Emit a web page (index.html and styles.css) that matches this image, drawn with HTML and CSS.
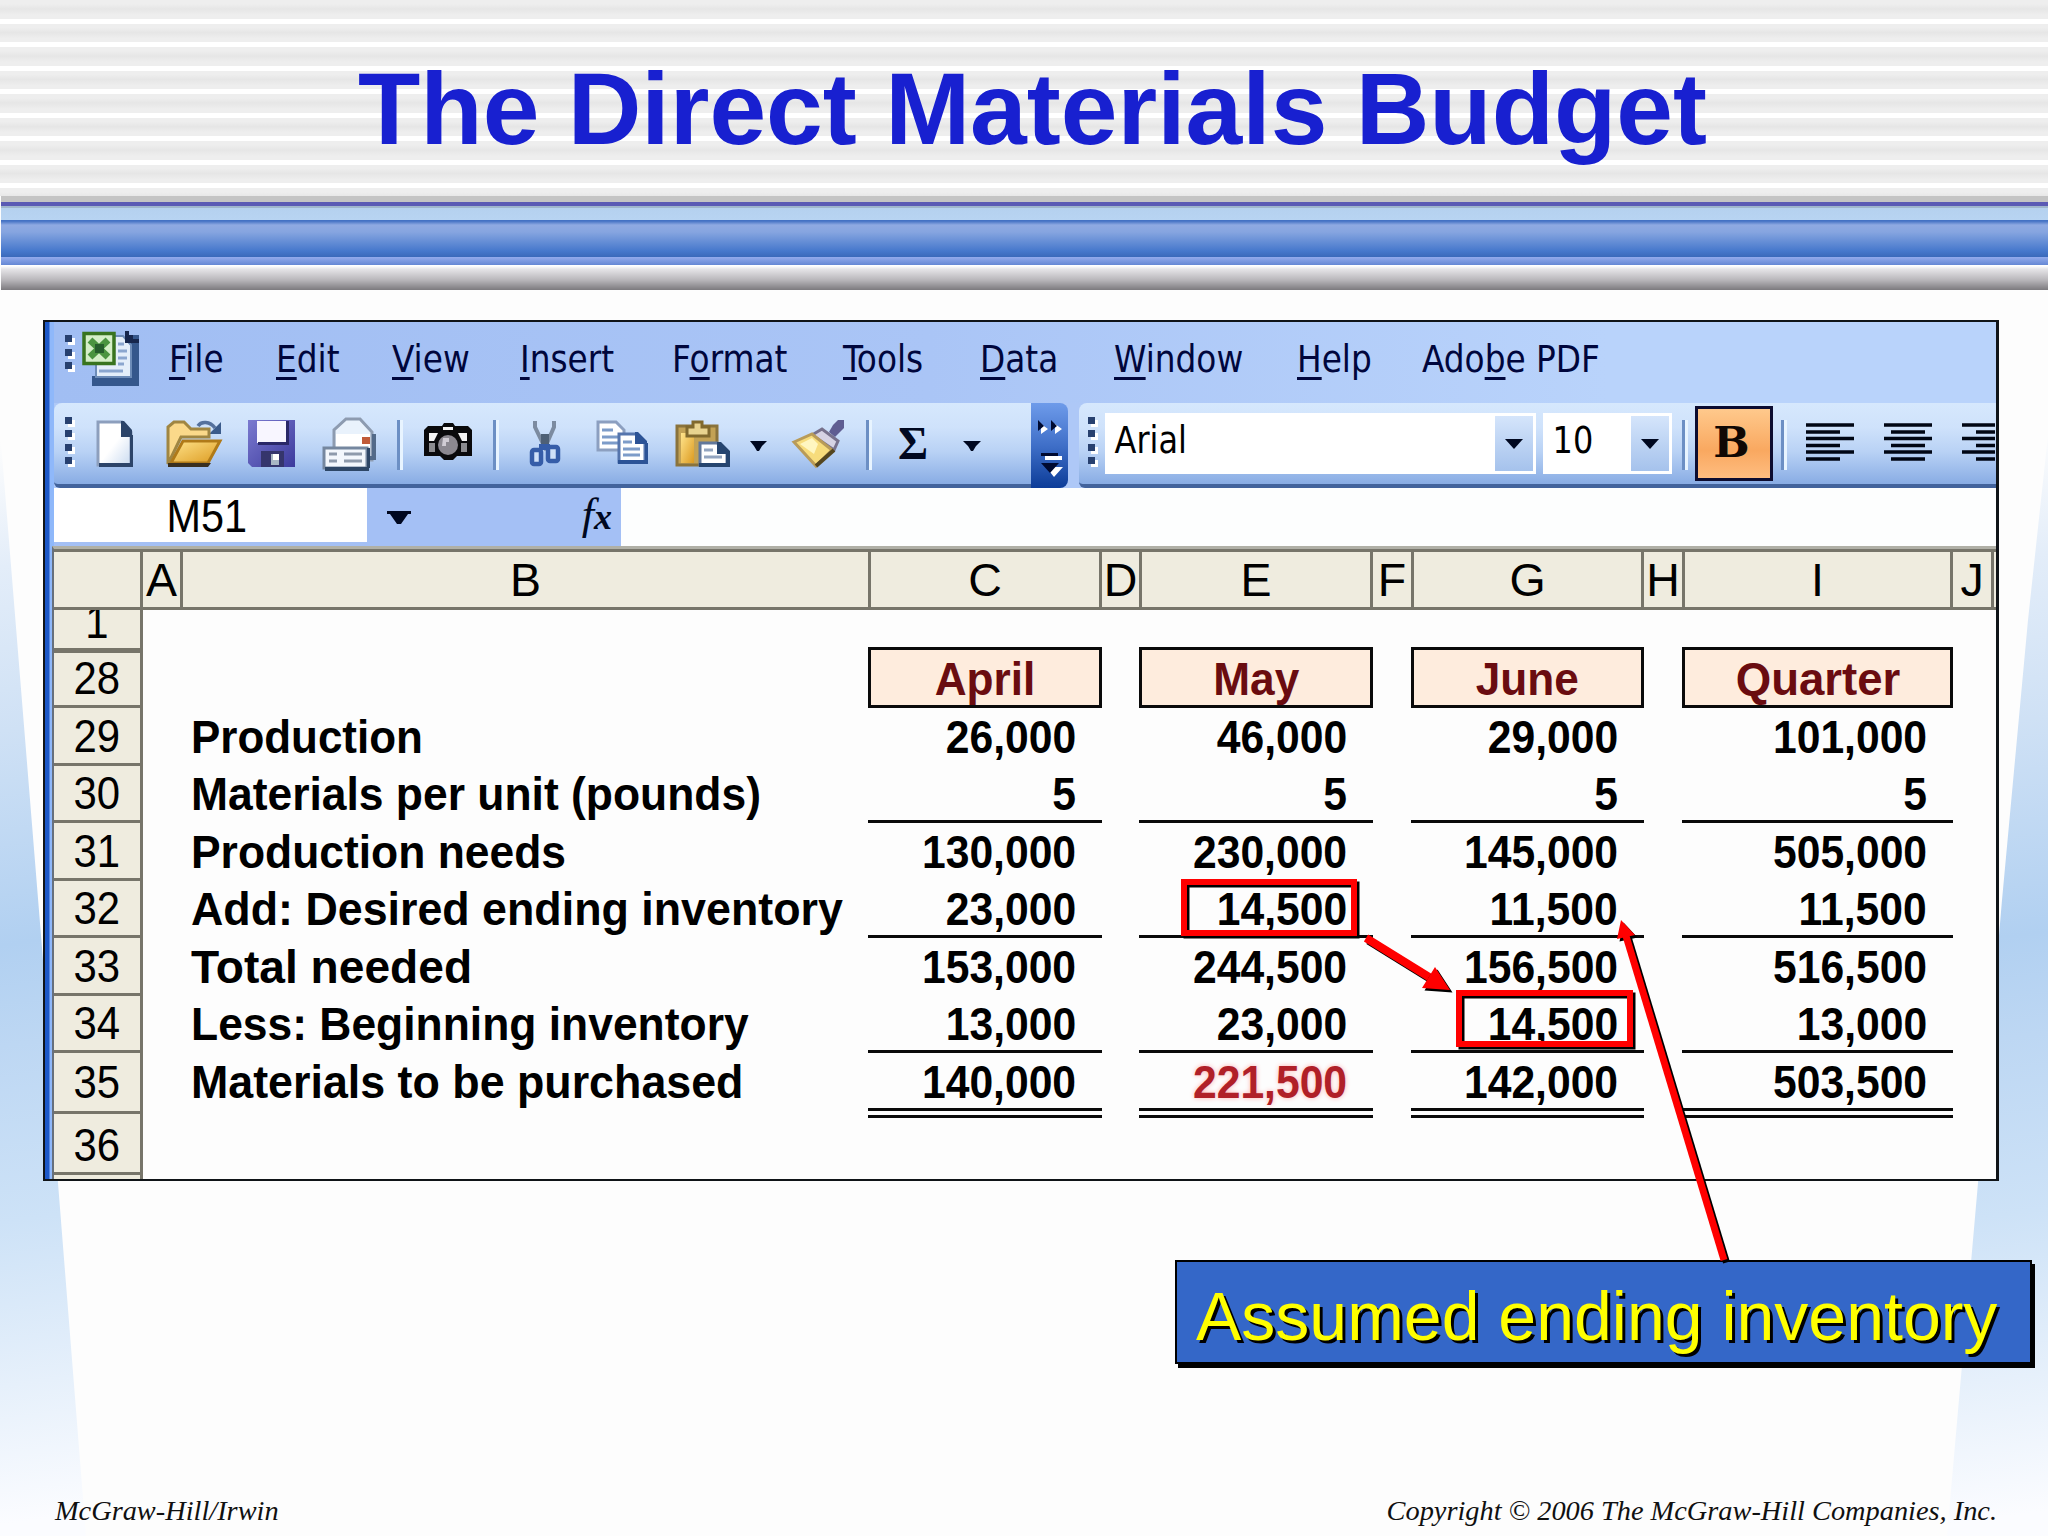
FILE: index.html
```html
<!DOCTYPE html>
<html lang="en">
<head>
    <meta charset="utf-8">
    <title>The Direct Materials Budget</title>
    <link rel="stylesheet" href="styles.css">
</head>
<body>
    <div class="slide">
        <div class="wedge wedge-left"></div>
        <div class="wedge wedge-right"></div>

        <header class="title-area">
            <h1>The Direct Materials Budget</h1>
        </header>
        <div class="bands">
            <div class="band-top"></div>
            <div class="band-purple"></div>
            <div class="band-light"></div>
            <div class="band-blue"></div>
            <div class="band-thin"></div>
            <div class="band-gray"></div>
        </div>

        <main class="window">
            <nav class="menu">
                <svg class="menu-icon" width="115" height="81" viewBox="54 322 115 81">
                    <g fill="#fff"><path d="M68 338h7v7h-7zM68 352h7v7h-7zM68 365h7v7h-7z"/></g>
                    <g fill="#27406f"><path d="M65 335h7v7h-7zM65 349h7v7h-7zM65 362h7v7h-7z"/></g>
                    <path fill="#35578c" d="M92 376h38v-41h9v51H92z"/>
                    <path fill="#e4eefa" stroke="#6d8cb8" stroke-width="2" d="M96 336h27l8 9v32H96z"/>
                    <path fill="#16264d" d="M125 331h4v4h4v4h6v4h-14z"/>
                    <path stroke="#8ba6cf" stroke-width="3" d="M99 371h24M118 351h9M118 358h9M118 364h6M118 344h6"/>
                    <path fill="#d5efc8" stroke="#38741f" stroke-width="3.500" d="M84 333.500h30v30H84z"/>
                    <path stroke="#4b9440" stroke-width="7" d="M90 340l18 17M108 340l-18 17"/>
                    <path fill="#265e2c" d="M95 344h9v9h-9z"/>
                </svg>
                <span><u>F</u>ile</span>
                <span><u>E</u>dit</span>
                <span><u>V</u>iew</span>
                <span><u>I</u>nsert</span>
                <span>F<u>o</u>rmat</span>
                <span><u>T</u>ools</span>
                <span><u>D</u>ata</span>
                <span><u>W</u>indow</span>
                <span><u>H</u>elp</span>
                <span>Ado<u>b</u>e PDF</span>
            </nav>

            <div class="toolbars">
                <div class="toolbar standard">
                    <svg width="31" height="81" viewBox="54 403 31 81">
                        <path fill="#fff" d="M68 420h7v7h-7zM68 433h7v7h-7zM68 447h7v7h-7zM68 460h7v7h-7z"/>
                        <path fill="#27406f" d="M65 417h7v7h-7zM65 430h7v7h-7zM65 444h7v7h-7zM65 457h7v7h-7z"/>
                    </svg>
                    <!-- new -->
                    <svg width="70" height="81" viewBox="85 403 70 81">
                        <defs>
                            <linearGradient id="paper" x1="0" y1="0" x2="1" y2="1"><stop offset=".5" stop-color="#fff"/><stop offset="1" stop-color="#c9daf0"/></linearGradient>
                            <linearGradient id="gold" x1="0" y1="0" x2="1" y2="1"><stop offset="0" stop-color="#ffe48c"/><stop offset="1" stop-color="#dc9a20"/></linearGradient>
                            <linearGradient id="violet" x1="0" y1="0" x2="1" y2="1"><stop offset="0" stop-color="#7b7ad0"/><stop offset="1" stop-color="#3c3a9c"/></linearGradient>
                        </defs>
                        <path fill="url(#paper)" stroke="#8d9fbd" stroke-width="3" d="M98 422h24l9 10v33H98z"/>
                        <path fill="#2c4469" d="M121 421h3l8 9v7h-11zM130 435h3v32H99v-4h31z"/>
                    </svg>
                    <!-- open -->
                    <svg width="80" height="81" viewBox="155 403 80 81">
                        <path fill="none" stroke="#55719d" stroke-width="3.500" d="M198 426c3-5 12-5 17 2"/>
                        <path fill="#3b5b8b" d="M221 422v12h-12z"/>
                        <path fill="#fbd98a" stroke="#a08642" stroke-width="3" d="M168 464v-37l6-5h10l7 7h18v8h-28z"/>
                        <path fill="url(#gold)" stroke="#b07a18" stroke-width="3" d="M183 441h37l-12 22h-37z"/>
                        <path fill="#3a3020" d="M168 463h43l-3 4h-40z"/>
                    </svg>
                    <!-- save -->
                    <svg width="75" height="81" viewBox="235 403 75 81">
                        <path fill="url(#violet)" d="M248 420h47v47h-43l-4-4z"/>
                        <path fill="#f8f6ff" d="M257 421h29v22h-29z"/>
                        <path fill="#2a2868" d="M286 421h3v24h-31v-3h28z"/>
                        <path fill="#35356c" d="M261 451h23v16h-23z"/>
                        <path fill="#a9b7c4" d="M271 454h8v11h-8z"/>
                        <path fill="#fff" d="M273 454h6v6h-6z"/>
                    </svg>
                    <!-- print -->
                    <svg width="83" height="81" viewBox="310 403 83 81">
                        <path fill="#e9f2fc" stroke="#8d9bb0" stroke-width="3" d="M334 437v-7l12-11h14l12 13v28h-38z"/>
                        <path fill="#536a89" d="M372 434h4v26h-7v-4h3z"/>
                        <path fill="#fff" d="M336 434h34v13h-34z"/>
                        <path fill="#c05a38" d="M362 437h8v7h-8z"/>
                        <path fill="#f3f7fc" stroke="#75879f" stroke-width="3" d="M324 448h43v20h-43z"/>
                        <path fill="#2d4666" d="M325 467h44v4h-44zM367 448h3v20h-3z"/>
                        <path stroke="#8e9aab" stroke-width="3" d="M329 454h8M329 461h8M344 454h18M344 461h18"/>
                    </svg>
                    <i class="sep"></i>
                    <!-- camera -->
                    <svg width="86" height="81" viewBox="403 403 86 81">
                        <path fill="#0a0a0c" d="M424 430l4-4h14l2-3h9l2 3h13l4 4v26h-15l-4 4h-9l-4-4h-16z"/>
                        <path fill="#f4f4f4" d="M429 433h9l-4 8h-5zM467 433h-9l4 8h5zM443 427h10v3h-10z"/>
                        <path fill="#8c8c90" d="M429 443h6v9h-6zM461 443h6v9h-6z"/>
                        <circle cx="448" cy="445" r="10" fill="#8b8890"/>
                        <path fill="#d0ccd4" d="M443 438h6v4h-3v4h-4z"/>
                    </svg>
                    <i class="sep"></i>
                    <!-- cut -->
                    <svg width="86" height="81" viewBox="499 403 86 81">
                        <path stroke="#7c8ba0" stroke-width="4" fill="none" d="M535 421v6l11 23M554 421v6l-10 23"/>
                        <path fill="#4e6076" d="M541 434h8v12h-8z"/>
                        <rect x="532" y="450" width="9" height="14" rx="2" fill="#cfe0f8" stroke="#365da8" stroke-width="4.500"/>
                        <rect x="548" y="447" width="10" height="14" rx="2" fill="#cfe0f8" stroke="#365da8" stroke-width="4.500"/>
                        <path fill="#365da8" d="M539 444h11v6h-11z"/>
                    </svg>
                    <!-- copy -->
                    <svg width="80" height="81" viewBox="585 403 80 81">
                        <path fill="#fff" stroke="#8c9fc0" stroke-width="3" d="M598 422h18l8 8v20h-26z"/>
                        <path stroke="#7d9cc9" stroke-width="3" d="M602 430h11M602 437h16M602 443h16"/>
                        <path fill="#fff" stroke="#5575ad" stroke-width="3" d="M619 434h17l9 9v19h-26z"/>
                        <path fill="#2c5396" d="M635 432h3l9 9v3h-12zM645 443h3v21h-30v-4h27z"/>
                        <path stroke="#7d9cc9" stroke-width="3" d="M623 442h9M623 449h17M623 455h17"/>
                    </svg>
                    <!-- paste -->
                    <svg width="115" height="81" viewBox="665 403 115 81">
                        <path fill="#c3a255" stroke="#8a733c" stroke-width="3" d="M677 426h40v39h-40z"/>
                        <path fill="url(#gold)" d="M681 433h13v30h-13z"/>
                        <path fill="#e8d38f" stroke="#80692e" stroke-width="3" d="M687 436v-9h6v-5h9v5h7v9z"/>
                        <path fill="#fff" stroke="#62789b" stroke-width="3" d="M700 443h17l10 9v13h-27z"/>
                        <path fill="#26456f" d="M717 442h4l9 9v16h-31v-4h27v-9h-9z"/>
                        <path stroke="#93a5c0" stroke-width="3" d="M704 450h9M704 457h18"/>
                        <path fill="#000820" d="M750 441h17l-5 5-3 5h-2l-3-5z"/>
                    </svg>
                    <!-- format painter -->
                    <svg width="82" height="81" viewBox="780 403 82 81">
                        <path fill="#5f5d92" d="M833 425l5-5h6v8l-9 9-6-5z"/>
                        <path fill="#d6d3e4" stroke="#77718c" stroke-width="3" d="M812 435l10-6 16 12-4 9z"/>
                        <path fill="#f7dc7c" stroke="#b99b58" stroke-width="3" d="M794 442l18-8 20 16-16 16z"/>
                        <path fill="#fff6c0" d="M800 444l12-6 6 6-4 10z"/>
                        <path stroke="#54461f" stroke-width="4" d="M834 450l-18 16"/>
                    </svg>
                    <i class="sep"></i>
                    <span class="sigma">&Sigma;</span>
                    <svg width="91" height="81" viewBox="940 403 91 81">
                        <path fill="#000820" d="M963 441h18l-5 5-3 5h-2l-3-5z"/>
                    </svg>
                </div>
                <svg class="grip" width="37" height="85" viewBox="1031 403 37 85">
                    <path fill="#fff" d="M1041 424l7 5-7 5zM1055 424l7 5-7 5zM1045 456h17v4h-17zM1046 467h17l-9 10z"/>
                    <path fill="#000a30" d="M1038 420l6 6-6 5zM1051 420l6 6-6 5zM1041 453h17v3h-17zM1041 463h18l-9 10z"/>
                </svg>
                <div class="toolbar formatting">
                    <svg width="26" height="81" viewBox="1079 403 26 81">
                        <path fill="#fff" d="M1091 420h7v7h-7zM1091 433h7v7h-7zM1091 447h7v7h-7zM1091 460h7v7h-7z"/>
                        <path fill="#27406f" d="M1088 417h7v7h-7zM1088 430h7v7h-7zM1088 444h7v7h-7zM1088 457h7v7h-7z"/>
                    </svg>
                    <div class="combo font-name"><span>Arial</span><b></b></div>
                    <div class="combo font-size"><span>10</span><b></b></div>
                    <i class="sep"></i>
                    <div class="bold-btn">B</div>
                    <i class="sep"></i>
                    <svg class="aligns" width="208" height="81" viewBox="1788 403 208 81">
                        <path stroke="#000614" stroke-width="3.400" d="M1807 425h48M1807 432h34M1807 438.500h48M1807 445.500h34M1807 452h48M1807 459h34
                            M1885 425h48M1892 432h34M1885 438.500h48M1892 445.500h34M1885 452h48M1892 459h34
                            M1963 425h48M1977 432h34M1963 438.500h48M1977 445.500h34M1963 452h48M1977 459h34"/>
                    </svg>
                </div>
            </div>

            <div class="formula-bar">
                <div class="name-box"><span>M51</span></div>
                <div class="fx-area">
                    <svg width="24" height="13" viewBox="0 0 24 13"><path fill="#000820" d="M0 0h24v3h-3l-7 10h-4L3 3H0z"/></svg>
                    <em>f<small>x</small></em>
                </div>
                <div class="formula"></div>
            </div>

            <div class="sheet">
                <div class="cols">
                    <div></div><div>A</div><div>B</div><div>C</div><div>D</div><div>E</div><div>F</div><div>G</div><div>H</div><div>I</div><div>J</div><div></div>
                </div>
                <div class="row r1"><div class="num"><span>1</span></div></div>
                <div class="row r28">
                    <div class="num"><span>28</span></div>
                    <div class="label"></div>
                    <div class="month"><span>April</span></div>
                    <div class="month"><span>May</span></div>
                    <div class="month"><span>June</span></div>
                    <div class="month quarter"><span>Quarter</span></div>
                </div>
                <div class="row r29">
                    <div class="num"><span>29</span></div>
                    <div class="label"><span>Production</span></div>
                    <div class="val"><span>26,000</span></div>
                    <div class="val"><span>46,000</span></div>
                    <div class="val"><span>29,000</span></div>
                    <div class="val"><span>101,000</span></div>
                </div>
                <div class="row r30 line">
                    <div class="num"><span>30</span></div>
                    <div class="label"><span>Materials per unit (pounds)</span></div>
                    <div class="val"><span>5</span></div>
                    <div class="val"><span>5</span></div>
                    <div class="val"><span>5</span></div>
                    <div class="val"><span>5</span></div>
                </div>
                <div class="row r31">
                    <div class="num"><span>31</span></div>
                    <div class="label"><span>Production needs</span></div>
                    <div class="val"><span>130,000</span></div>
                    <div class="val"><span>230,000</span></div>
                    <div class="val"><span>145,000</span></div>
                    <div class="val"><span>505,000</span></div>
                </div>
                <div class="row r32 line">
                    <div class="num"><span>32</span></div>
                    <div class="label"><span>Add: Desired ending inventory</span></div>
                    <div class="val"><span>23,000</span></div>
                    <div class="val"><span>14,500</span></div>
                    <div class="val"><span>11,500</span></div>
                    <div class="val"><span>11,500</span></div>
                </div>
                <div class="row r33">
                    <div class="num"><span>33</span></div>
                    <div class="label"><span>Total needed</span></div>
                    <div class="val"><span>153,000</span></div>
                    <div class="val"><span>244,500</span></div>
                    <div class="val"><span>156,500</span></div>
                    <div class="val"><span>516,500</span></div>
                </div>
                <div class="row r34 line">
                    <div class="num"><span>34</span></div>
                    <div class="label"><span>Less: Beginning inventory</span></div>
                    <div class="val"><span>13,000</span></div>
                    <div class="val"><span>23,000</span></div>
                    <div class="val"><span>14,500</span></div>
                    <div class="val"><span>13,000</span></div>
                </div>
                <div class="row r35 total">
                    <div class="num"><span>35</span></div>
                    <div class="label"><span>Materials to be purchased</span></div>
                    <div class="val"><span>140,000</span></div>
                    <div class="val red"><span>221,500</span></div>
                    <div class="val"><span>142,000</span></div>
                    <div class="val"><span>503,500</span></div>
                </div>
                <div class="row r36"><div class="num"><span>36</span></div></div>
                <div class="row last"><div class="num"></div></div>
            </div>
        </main>

        <div class="callout">Assumed ending inventory</div>

        <footer>
            <span>McGraw-Hill/Irwin</span>
            <span>Copyright &copy; 2006 The McGraw-Hill Companies, Inc.</span>
        </footer>

        <!-- highlight boxes and arrows over the sheet -->
        <svg class="marks" width="2048" height="1536" viewBox="0 0 2048 1536">
            <g fill="none" stroke="#000" transform="translate(2.500 2.500)">
                <path stroke-width="6" d="M1184 882h170v51h-170zM1459 993h171v51h-171z"/>
                <path stroke-width="8" d="M1366 938l63 39"/>
                <path stroke-width="7" d="M1626 936l98 324"/>
                <path fill="#000" stroke="none" d="M1450 990l-28-2 13-21zM1621 920l14 15-18 4z"/>
            </g>
            <g fill="none" stroke="#f00">
                <path stroke-width="6" d="M1184 882h170v51h-170zM1459 993h171v51h-171z"/>
                <path stroke-width="8" d="M1366 938l63 39"/>
                <path stroke-width="7" d="M1626 936l98 324"/>
                <path fill="#f00" stroke="none" d="M1450 990l-28-2 13-21zM1621 920l14 15-18 4z"/>
            </g>
        </svg>
    </div>
</body>
</html>
```

FILE: styles.css
```css
* {
    box-sizing: border-box;
}
body {
    margin: 0;
    background: #fdfdfd;
    font-family: "Liberation Sans", Arial, sans-serif;
}
.slide {
    position: relative;
    width: 2048px;
    height: 1536px;
    overflow: hidden;
    display: flex;
    flex-direction: column;
}

/* light blue wedges on both sides */
.wedge {
    position: absolute;
    top: 290px;
    width: 102px;
    height: 1246px;
    background: linear-gradient(172deg, #fdfdfd 12%, #e3edf9 22%, #cfe1f5 35%, #b1d0f1 52%, #bdd7f3 60%, #cde2f7 74%, #e6f0fb 87%, #fbfcff 98%);
}
.wedge-left {
    left: 0;
    clip-path: polygon(0 140px, 43px 670px, 58px 893px, 86px 1246px, 0 1246px);
}
.wedge-right {
    right: 0;
    clip-path: polygon(102px 145px, 102px 1246px, 1px 1246px, 32px 893px, 56px 610px, 82px 330px);
}

/* title */
.title-area {
    height: 196px;
    background: repeating-linear-gradient(#eee 0, #eee 4px, #e6e6e6 9px, #eee 15px, #eee 18.500px, #fff 18.500px, #fff 23.500px);
}
h1 {
    margin: 0;
    padding: 51px 0 0 17px;
    text-align: center;
    font-size: 102px;
    line-height: 117px;
    color: #1820d0;
}
.bands {
    margin-left: 1px;
}
.band-top { height: 6px; background: #c4c4c4; }
.band-purple { height: 4px; background: #5a5ab4; }
.band-light { height: 14px; background: linear-gradient(#9fb6cc 2px, #b5d1ef 2px, #b8d4f2); }
.band-blue { height: 37px; background: linear-gradient(#4472c4 1px, #8faae2 5px, #86a5e0 12px, #4678cc 31px, #3a69ba); }
.band-thin { height: 8px; background: linear-gradient(#93abec, #6587d4); }
.band-gray { height: 25px; background: linear-gradient(#fff 1px, #e6e5e8 4px, #b8b6ba 15px, #7c7a7e); }

/* Excel window */
.window {
    position: relative;
    width: 1956px;
    height: 861px;
    margin: 30px 0 0 43px;
    border: 2px solid #101418;
    border-right-width: 3px;
    padding-left: 9px;
    overflow: hidden;
    background: linear-gradient(90deg, #1c58c8 4px, #8fb8fa 5px, #8fb8fa 9px, #fdfdfd 9px);
}
.menu {
    display: grid;
    grid-template-columns: 115px 107px 116px 128px 152px 171px 137px 134px 183px 125px auto;
    height: 81px;
    background: linear-gradient(90deg, #a1bef3, #aac5f6 45%, #b9d3fb 80%);
    font-family: "DejaVu Sans Condensed", "DejaVu Sans", sans-serif;
    font-size: 37px;
    line-height: 43px;
    color: #00063c;
}
.menu span {
    padding-top: 16px;
    white-space: nowrap;
    transform: scaleX(.985);
    transform-origin: left;
}
u {
    text-decoration-thickness: 3px;
    text-underline-offset: 5px;
}
.toolbars {
    display: flex;
    height: 85px;
    background: #aec8f7;
}
.toolbar {
    display: flex;
    height: 85px;
    border-bottom: 4px solid #42639c;
    background: linear-gradient(#d6e8fd, #cfe2fb 30%, #b9d2f5 60%, #88ace4);
}
.toolbar svg {
    flex: none;
}
.standard {
    width: 977px;
    border-radius: 8px 0 0 6px;
}
.formatting {
    width: 917px;
    margin-left: 11px;
    border-radius: 8px 0 0 6px;
}
.grip {
    background: linear-gradient(#6e9bea, #3f6fc8 50%, #0c3c98);
    border-radius: 0 8px 8px 0;
}
.sep {
    flex: none;
    width: 6px;
    height: 50px;
    margin: 17px 0 0 4px;
    border-left: 3px solid #6c8fc4;
    border-right: 3px solid #e8f4ff;
}
.sigma {
    width: 68px;
    padding: 16px 0 0 26px;
    font: bold 46px/50px "Liberation Serif", serif;
    color: #000820;
}
.combo {
    display: flex;
    justify-content: space-between;
    height: 61px;
    margin-top: 10px;
    background: #fff;
    font-family: "DejaVu Sans Condensed", "DejaVu Sans", sans-serif;
    font-size: 37px;
    line-height: 56px;
}
.combo span {
    padding-left: 10px;
    transform: scaleX(.96);
    transform-origin: left;
}
.combo b {
    width: 38px;
    margin: 3px;
    background: linear-gradient(#d5e5fb, #a5c2ec);
    display: flex;
    align-items: center;
    justify-content: center;
}
.combo b::after {
    content: "";
    border: 9px solid transparent;
    border-top: 10px solid #000820;
    border-bottom: 0;
}
.font-name { width: 431px; }
.font-size { width: 129px; margin-left: 7px; }
.formatting .sep {
    margin-left: 10px;
}
.bold-btn {
    width: 78px;
    height: 75px;
    margin: 3px 0 0 7px;
    padding-right: 5px;
    border: 3px solid #0c0c30;
    background: linear-gradient(#ffc98c, #f9a860 60%, #ffbd80);
    text-align: center;
    font: bold 43px/67px "DejaVu Serif", serif;
    color: #100804;
}
.bold-btn + .sep {
    margin-left: 8px;
}

.formula-bar {
    display: flex;
    height: 58px;
    background: #a4c0f5;
}
.name-box {
    width: 313px;
    height: 54px;
    background: #fff;
    text-align: center;
    font-size: 46px;
    line-height: 56px;
    padding-right: 8px;
}
.name-box span,
.num span {
    display: inline-block;
    transform: scaleX(.9);
}
.fx-area {
    display: flex;
    justify-content: space-between;
    width: 254px;
    padding: 0 9px 0 20px;
}
.fx-area svg {
    margin-top: 23px;
}
.fx-area em {
    font: italic 44px/54px "Liberation Serif", serif;
    color: #000820;
}
.fx-area small {
    font-size: 36px;
    font-weight: bold;
}
.formula {
    flex: 1;
    background: #fdfefe;
}

/* sheet */
.sheet {
    margin-left: -2px;
    border-left: 2px solid #67707c;
    border-top: 3px solid #b0b0a6;
    font-size: 46.500px;
    line-height: 46px;
}
.cols {
    display: grid;
    grid-template-columns: 89px 40px 688px 231px 40px 231px 41px 230px 41px 268px 41px 1fr;
    height: 61px;
    border-top: 3px solid #77756a;
    border-bottom: 3px solid #77756a;
    background: #efecdf;
}
.cols div {
    border-right: 3px solid #77756a;
    padding-top: 5px;
    text-align: center;
}
.cols div:last-child {
    border: 0;
}
/* value columns carry the narrow D, F and H gaps as right margins */
.row {
    display: grid;
    grid-template-columns: 89px 725px 271px 272px 271px 271px;
    grid-template-rows: 100%;
    height: 57.500px;
}
.num {
    display: flex;
    align-items: flex-end;
    justify-content: center;
    padding-bottom: 4px;
    border-right: 3px solid #77756a;
    border-bottom: 3px solid #77756a;
    background: #efecdf;
    overflow: hidden;
}
.label,
.val {
    display: flex;
    align-items: flex-end;
    padding-bottom: 6px;
    font-weight: bold;
    white-space: nowrap;
}
.label {
    padding-left: 48px;
}
.label span {
    transform: scaleX(.955);
    transform-origin: left;
}
.r29 .label span { transform: scaleX(.945); }
.r32 .label span,
.r35 .label span { transform: scaleX(.963); }
.r33 .label span { transform: scaleX(.992); }
.val {
    justify-content: flex-end;
    padding-right: 26px;
}
.val span {
    transform: scaleX(.917);
    transform-origin: right;
}
.val:nth-child(3),
.month:nth-child(3) { margin-right: 37px; }
.val:nth-child(4),
.month:nth-child(4),
.val:nth-child(5),
.month:nth-child(5) { margin-right: 38px; }
.month {
    height: 61px;
    margin-top: -6px;
    border: 3px solid #0a0a0a;
    background: #feecdd;
    color: #6a0c10;
    font-weight: bold;
    text-align: center;
    padding-top: 6px;
}
.month span {
    display: inline-block;
    transform: scaleX(.95);
}
.quarter span {
    transform: scaleX(.98);
}
.r28 { height: 55px; }
.line .val {
    border-bottom: 3px solid #0a0a0a;
    padding-bottom: 3px;
}
.r1 { height: 43px; }
.r1 .num {
    border-bottom-width: 5px;
    padding-bottom: 3px;
}
.r35 { height: 61px; }
.r35 .num { padding-bottom: 6px; }
.r35 .label { padding-bottom: 9px; }
.total .val {
    height: 65px;
    border-bottom: 10px double #0a0a0a;
    padding-bottom: 3px;
}
.red {
    color: #b02028;
    text-shadow: 0 0 6px #ffb0b0;
}
.r36 { height: 61px; }
.last { height: 4px; }
.last .num { border-bottom: 0; padding: 0; }

.callout {
    position: absolute;
    left: 1175px;
    top: 1260px;
    width: 857px;
    height: 104px;
    border: 2px solid #000;
    background: #3467c8;
    box-shadow: 3px 4px 0 #000;
    padding-left: 19px;
    font-size: 68px;
    line-height: 108px;
    color: #ff0;
    text-shadow: 3px 3px 0 #000;
    white-space: nowrap;
}
footer {
    display: flex;
    justify-content: space-between;
    margin-top: auto;
    padding: 0 51px 9px 55px;
    font: italic 28.350px/32px "Liberation Serif", serif;
    color: #101010;
    position: relative;
}
.marks {
    position: absolute;
    left: 0;
    top: 0;
}
```
